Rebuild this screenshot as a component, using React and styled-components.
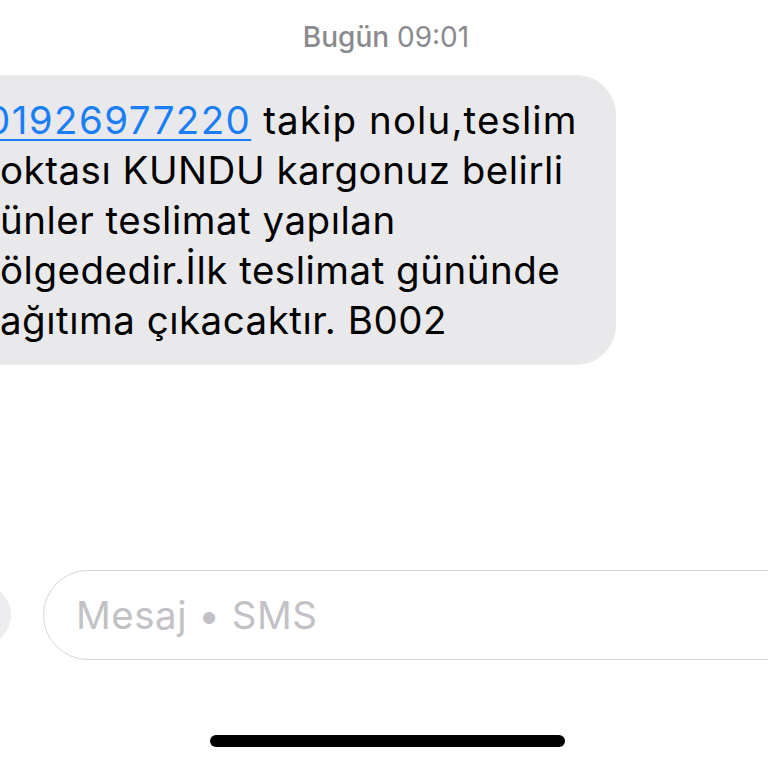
import React from "react";
import styled, { createGlobalStyle } from "styled-components";

const GlobalStyle = createGlobalStyle`
  html, body {
    margin: 0;
    padding: 0;
    background: #ffffff;
    overflow: hidden;
  }
`;

const lines = [
  { text: "takip nolu,teslim", link: "01926977220", indent: -14, spacing: 1.1 },
  { text: "oktası KUNDU kargonuz belirli" },
  { text: "ünler teslimat yapılan" },
  { text: "ölgededir.İlk teslimat gününde" },
  { text: "ağıtıma çıkacaktır. B002" },
];

const App = () => {
  return (
    <Screen>
      <GlobalStyle />
      <Stamp>
        <b>Bugün</b> 09:01
      </Stamp>

      <Bubble>
        {lines.map((line, i) => (
          <Line key={i} $indent={line.indent || 0} $spacing={line.spacing || 0.5}>
            {line.link && <Link>{line.link}</Link>}
            {line.link && " "}
            {line.text}
          </Line>
        ))}
      </Bubble>

      <InputRow>
        <AppsButton />
        <Field>Mesaj • SMS</Field>
      </InputRow>

      <HomeBar />
    </Screen>
  );
};

const Screen = styled.div`
  width: 768px;
  height: 768px;
  overflow: hidden;
  display: flex;
  flex-direction: column;
  font-family: Inter, "Noto Sans", "Liberation Sans", sans-serif;
  color: #000;
`;

const Stamp = styled.div`
  margin-top: 20px;
  text-align: center;
  font-size: 28px;
  line-height: 34px;
  color: #8a8a8e;
  padding-left: 4px;

  b {
    font-weight: 500;
  }
`;

const Bubble = styled.div`
  margin-top: 21px;
  margin-left: -40px;
  width: 656px;
  box-sizing: border-box;
  padding: 20px 40px 20px 40px;
  background: #e9e9eb;
  border-radius: 40px;
`;

const Line = styled.div`
  font-size: 38.5px;
  line-height: 50px;
  letter-spacing: ${({ $spacing }) => $spacing}px;
  white-space: nowrap;
  text-indent: ${({ $indent }) => $indent}px;
`;

const Link = styled.span`
  color: #1a7ff5;
  letter-spacing: 1.4px;
  text-decoration: underline;
  text-decoration-thickness: 2px;
  text-underline-offset: 5px;
`;

const InputRow = styled.div`
  margin-top: 205px;
  height: 90px;
  display: flex;
  align-items: center;
  gap: 32px;
`;

const AppsButton = styled.div`
  flex: none;
  width: 62px;
  height: 62px;
  margin-left: -51px;
  border-radius: 50%;
  background: #ececee;
`;

const Field = styled.div`
  flex: 1;
  height: 90px;
  margin-right: -60px;
  box-sizing: border-box;
  border: 1.5px solid #d6d6d9;
  border-radius: 45px;
  padding-left: 32px;
  display: flex;
  align-items: center;
  font-size: 38.5px;
  letter-spacing: 0.5px;
  color: #c2c2c6;
`;

const HomeBar = styled.div`
  margin-top: 75px;
  margin-left: 210px;
  width: 355px;
  height: 12px;
  border-radius: 6px;
  background: #000;
`;

export default App;
